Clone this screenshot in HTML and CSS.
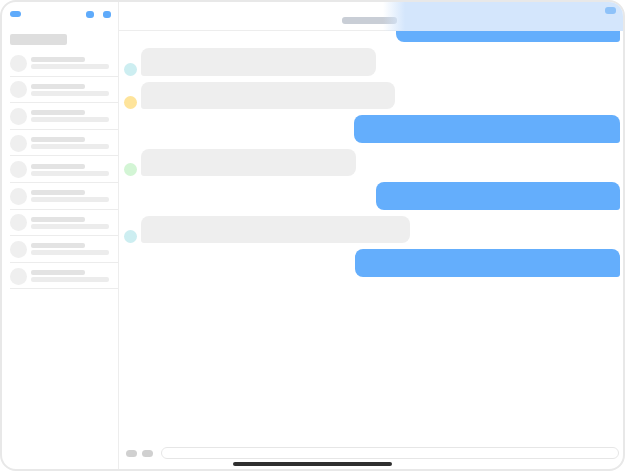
FILE: index.html
```html
<!DOCTYPE html>
<html lang="en">
<head>
<meta charset="utf-8">
<title>Chat skeleton</title>
<link rel="stylesheet" href="styles.css">
</head>
<body>
<div class="device">
  <aside class="sidebar">
    <div class="side-head">
      <span class="pill-blue wide"></span>
      <span class="side-actions"><span class="pill-blue dot"></span><span class="pill-blue dot"></span></span>
    </div>
    <div class="side-title"></div>
    <ul class="list">
      <li class="item"><span class="av"></span><span class="lines"><span class="l1"></span><span class="l2"></span></span></li>
      <li class="item"><span class="av"></span><span class="lines"><span class="l1"></span><span class="l2"></span></span></li>
      <li class="item"><span class="av"></span><span class="lines"><span class="l1"></span><span class="l2"></span></span></li>
      <li class="item"><span class="av"></span><span class="lines"><span class="l1"></span><span class="l2"></span></span></li>
      <li class="item"><span class="av"></span><span class="lines"><span class="l1"></span><span class="l2"></span></span></li>
      <li class="item"><span class="av"></span><span class="lines"><span class="l1"></span><span class="l2"></span></span></li>
      <li class="item"><span class="av"></span><span class="lines"><span class="l1"></span><span class="l2"></span></span></li>
      <li class="item"><span class="av"></span><span class="lines"><span class="l1"></span><span class="l2"></span></span></li>
      <li class="item"><span class="av"></span><span class="lines"><span class="l1"></span><span class="l2"></span></span></li>
    </ul>
  </aside>
  <main class="main">
    <header class="head">
      <span></span>
      <span class="head-title"></span>
      <span class="head-btn"></span>
      <div class="glow"></div>
    </header>
    <section class="msgs">
      <div class="row sent first"><div class="bubble out" style="width:224px"></div></div>
      <div class="row"><span class="mav cyan"></span><div class="bubble in" style="width:235px"></div></div>
      <div class="row"><span class="mav yellow"></span><div class="bubble in" style="width:254px"></div></div>
      <div class="row sent"><div class="bubble out" style="width:266px"></div></div>
      <div class="row"><span class="mav green"></span><div class="bubble in" style="width:215px"></div></div>
      <div class="row sent"><div class="bubble out" style="width:244px"></div></div>
      <div class="row"><span class="mav cyan"></span><div class="bubble in" style="width:269px"></div></div>
      <div class="row sent"><div class="bubble out" style="width:265px"></div></div>
    </section>
    <footer class="composer">
      <span class="tool"></span>
      <span class="tool"></span>
      <div class="input"></div>
    </footer>
  </main>
  <div class="home"></div>
</div>
</body>
</html>
```

FILE: styles.css
```css
* { box-sizing: border-box; }
html, body { margin: 0; padding: 0; background: #ffffff; font-family: "Liberation Sans", sans-serif; }

.device {
  width: 625px;
  height: 471px;
  border: 2px solid #e8e8e8;
  border-radius: 16px;
  overflow: hidden;
  display: flex;
  position: relative;
  background: #fff;
}

.sidebar {
  width: 117px;
  flex: none;
  border-right: 1px solid #ededed;
  padding: 9px 0 0 8px;
  display: flex;
  flex-direction: column;
}
.side-head {
  display: flex;
  justify-content: space-between;
  align-items: center;
  padding-right: 7px;
  height: 6px;
}
.side-actions { display: flex; gap: 9px; }
.pill-blue { display: block; background: #5fabfb; border-radius: 3px; height: 6px; }
.pill-blue.wide { width: 11px; }
.pill-blue.dot { width: 8px; height: 7px; border-radius: 3px; }

.side-title {
  margin-top: 17px;
  width: 57px;
  height: 11px;
  background: #dedede;
  border-radius: 2px;
}

.list { list-style: none; margin: 5px 0 0; padding: 0; }
.item {
  height: 26.6px;
  display: flex;
  align-items: center;
  gap: 4px;
  padding-top: 1px;
  border-bottom: 1px solid #ececec;
}
.av { width: 17px; height: 17px; border-radius: 50%; background: #efefef; flex: none; }
.lines { display: flex; flex-direction: column; gap: 2px; }
.l1 { display: block; width: 54px; height: 5px; background: #e3e3e3; border-radius: 2px; }
.l2 { display: block; width: 78px; height: 5px; background: #ececec; border-radius: 2px; }

.main {
  flex: 1;
  display: flex;
  flex-direction: column;
  min-width: 0;
}
.head {
  height: 29px;
  flex: none;
  border-bottom: 1px solid #ededed;
  display: grid;
  grid-template-columns: 1fr auto 1fr;
  align-items: center;
  position: relative;
}
.head-title {
  width: 55px;
  height: 7px;
  background: #c9ced6;
  border-radius: 3px;
  margin-top: 8px;
  margin-right: 3px;
}
.head-btn {
  justify-self: end;
  width: 11px;
  height: 7px;
  background: #8ec2f9;
  border-radius: 3px;
  margin-right: 7px;
  margin-bottom: 11px;
  position: relative;
  z-index: 2;
}
.glow {
  position: absolute;
  left: 264px;
  top: 0;
  right: 0;
  bottom: -1px;
  background: linear-gradient(to right, rgba(212, 230, 252, 0), #d4e6fc 22px, #d4e6fc);
  z-index: 1;
}

.msgs {
  flex: 1;
  overflow: hidden;
  display: flex;
  flex-direction: column;
  gap: 6px;
  padding: 0 3px 0 5px;
}
.row { display: flex; align-items: flex-end; gap: 4px; flex: none; }
.row.sent { justify-content: flex-end; }
.row.first { margin-top: -16.3px; }
.mav { width: 13px; height: 13px; border-radius: 50%; flex: none; }
.cyan { background: #cdeef1; }
.yellow { background: #fee49b; }
.green { background: #d3f5d5; }
.bubble { height: 27.5px; border-radius: 8px; }
.bubble.in { background: #eeeeee; border-bottom-left-radius: 3px; }
.bubble.out { background: #64aefc; border-bottom-right-radius: 3px; }

.composer {
  flex: none;
  display: flex;
  align-items: center;
  gap: 5px;
  padding: 0 4px 10px 7px;
}
.tool { width: 11px; height: 7px; background: #d0d0d0; border-radius: 4px; flex: none; }
.tool + .tool + .input { margin-left: 3px; }
.input {
  flex: 1;
  height: 12px;
  border: 1px solid #e6e6e6;
  border-radius: 6px;
}

.home {
  position: absolute;
  left: 231px;
  bottom: 3px;
  width: 159px;
  height: 4px;
  background: #2f2f2f;
  border-radius: 2px;
}
```
